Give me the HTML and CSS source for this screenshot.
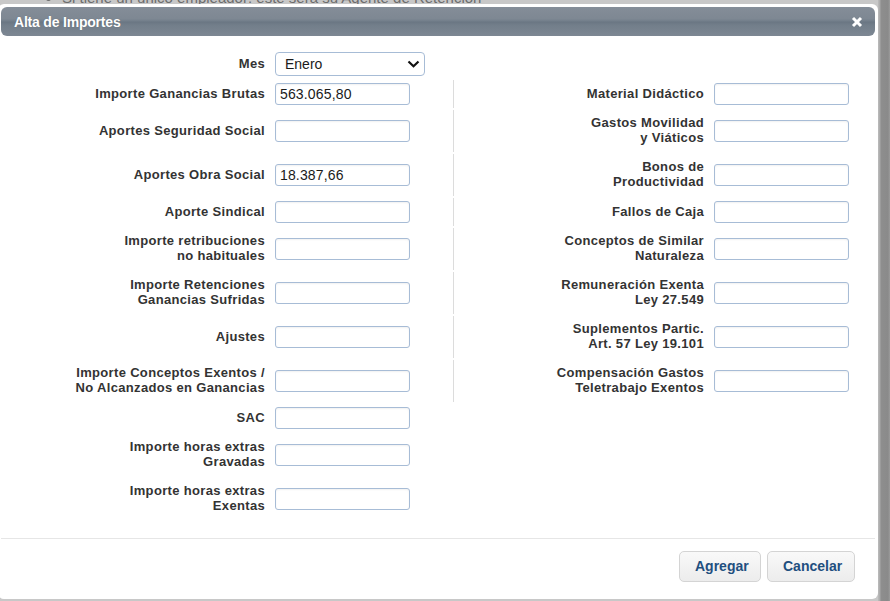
FILE: index.html
```html
<!DOCTYPE html>
<html lang="es">
<head>
<meta charset="utf-8">
<title>Alta de Importes</title>
<link rel="stylesheet" href="styles.css">
</head>
<body>
<div class="page">
  <ul class="bg-list">
    <li>Si tiene un único empleador: este será su Agente de Retención</li>
  </ul>
</div>
<div class="scroll-strip"></div>

<div class="dialog">
  <div class="titlebar">
    <span class="title">Alta de Importes</span>
    <svg class="close" width="12" height="12" viewBox="0 0 12 12"><path d="M2 2 L10 10 M10 2 L2 10" stroke="#fff" stroke-width="3" stroke-linecap="butt"/></svg>
  </div>
  <div class="content">
    <div class="form">
      <div class="lbl">Mes</div>
      <div class="fld sel-cell">
        <div class="select-wrap">
          <select class="select"><option>Enero</option></select>
          <svg class="chev" width="13" height="8" viewBox="0 0 13 8"><path d="M1.5 1.5 L6.5 6.2 L11.5 1.5" fill="none" stroke="#111" stroke-width="2.2"/></svg>
        </div>
      </div>
      <div></div><div></div>

      <div class="lbl">Importe Ganancias Brutas</div>
      <div class="fld"><input class="inp" value="563.065,80"></div>
      <div class="lbl div">Material Didáctico</div>
      <div class="fld"><input class="inp"></div>

      <div class="lbl">Aportes Seguridad Social</div>
      <div class="fld"><input class="inp"></div>
      <div class="lbl div">Gastos Movilidad<br>y Viáticos</div>
      <div class="fld"><input class="inp"></div>

      <div class="lbl">Aportes Obra Social</div>
      <div class="fld"><input class="inp" value="18.387,66"></div>
      <div class="lbl div">Bonos de<br>Productividad</div>
      <div class="fld"><input class="inp"></div>

      <div class="lbl">Aporte Sindical</div>
      <div class="fld"><input class="inp"></div>
      <div class="lbl div">Fallos de Caja</div>
      <div class="fld"><input class="inp"></div>

      <div class="lbl">Importe retribuciones<br>no habituales</div>
      <div class="fld"><input class="inp"></div>
      <div class="lbl div">Conceptos de Similar<br>Naturaleza</div>
      <div class="fld"><input class="inp"></div>

      <div class="lbl">Importe Retenciones<br>Ganancias Sufridas</div>
      <div class="fld"><input class="inp"></div>
      <div class="lbl div">Remuneración Exenta<br>Ley 27.549</div>
      <div class="fld"><input class="inp"></div>

      <div class="lbl">Ajustes</div>
      <div class="fld"><input class="inp"></div>
      <div class="lbl div">Suplementos Partic.<br>Art. 57 Ley 19.101</div>
      <div class="fld"><input class="inp"></div>

      <div class="lbl">Importe Conceptos Exentos /<br>No Alcanzados en Ganancias</div>
      <div class="fld"><input class="inp"></div>
      <div class="lbl div">Compensación Gastos<br>Teletrabajo Exentos</div>
      <div class="fld"><input class="inp"></div>

      <div class="lbl">SAC</div>
      <div class="fld"><input class="inp"></div>
      <div></div><div></div>

      <div class="lbl">Importe horas extras<br>Gravadas</div>
      <div class="fld"><input class="inp"></div>
      <div></div><div></div>

      <div class="lbl">Importe horas extras<br>Exentas</div>
      <div class="fld"><input class="inp"></div>
      <div></div><div></div>
    </div>
  </div>
  <div class="buttonpane">
    <button class="btn">Agregar</button>
    <button class="btn">Cancelar</button>
  </div>
</div>
</body>
</html>
```

FILE: styles.css
```css
html, body {
  margin: 0;
  padding: 0;
}
body {
  width: 890px;
  height: 601px;
  overflow: hidden;
  background: #c8c8c8;
  font-family: "Liberation Sans", Arial, sans-serif;
  position: relative;
}
.page {
  color: #6c6c6c;
  font-size: 15px;
  line-height: 18px;
}
.bg-list {
  margin: -11px 0 0 0;
  padding-left: 62px;
  list-style: disc;
}
.scroll-strip {
  position: absolute;
  left: 878px;
  top: 0;
  width: 12px;
  height: 601px;
  background: linear-gradient(to right, #bdbdbd 0, #a8a8a8 2px, #8e8e8e 3px, #8a8a8a 10px, #9c9c9c 12px);
}
.dialog {
  position: absolute;
  left: -2px;
  top: 4px;
  width: 880px;
  height: 595px;
  box-sizing: border-box;
  padding: 3px;
  background: #fff;
  border-radius: 6px;
  display: flex;
  flex-direction: column;
}
.titlebar {
  height: 29px;
  border-radius: 6px;
  background: linear-gradient(#848d98 0%, #7e8893 40%, #737f8b 48%, #6a7683 52%, #727e8a 62%, #7d8793 100%);
  display: flex;
  align-items: center;
  justify-content: space-between;
  padding: 0 12px 0 13px;
  flex: none;
}
.title {
  color: #fff;
  font-weight: bold;
  font-size: 14px;
  letter-spacing: -0.2px;
  text-shadow: 0 0 1px rgba(0,0,0,0.2);
}
.close {
  display: block;
}
.content {
  padding: 14px 0 18px 9px;
  flex: none;
}
.form {
  display: grid;
  grid-template-columns: 259px 180px 255px 140px;
  gap: 2px;
}
.lbl {
  display: flex;
  align-items: center;
  justify-content: flex-end;
  text-align: right;
  padding: 5px 4px 7px 0;
  font-size: 13px;
  line-height: 15px;
  font-weight: bold;
  letter-spacing: 0.33px;
  color: #333;
}
.lbl.div {
  border-left: 1px solid #dcdcdc;
}
.fld {
  display: flex;
  align-items: center;
  padding: 3px 0 3px 4px;
}
.fld.sel-cell {
  padding: 2px 0 2px 4px;
}
.inp {
  width: 135px;
  height: 22px;
  box-sizing: border-box;
  border: 1px solid #a7bcd6;
  border-radius: 3px;
  padding: 0 4px;
  margin: 0;
  font-family: "Liberation Sans", Arial, sans-serif;
  font-size: 14px;
  letter-spacing: 0.15px;
  color: #1a1a1a;
  background: #fff;
  box-shadow: inset 0 1px 2px rgba(0,0,0,0.06);
  outline: none;
}
.select-wrap {
  position: relative;
  width: 150px;
  height: 24px;
}
.select {
  appearance: none;
  -webkit-appearance: none;
  width: 150px;
  height: 24px;
  box-sizing: border-box;
  border: 1px solid #a7bcd6;
  border-radius: 4px;
  padding: 0 0 0 9px;
  margin: 0;
  font-family: "Liberation Sans", Arial, sans-serif;
  font-size: 14px;
  color: #1a1a1a;
  background: #fff;
  outline: none;
}
.chev {
  position: absolute;
  right: 5px;
  top: 8px;
  pointer-events: none;
}
.buttonpane {
  border-top: 1px solid #e6e6e6;
  padding: 12px 20px 0 0;
  display: flex;
  justify-content: flex-end;
  gap: 6px;
}
.btn {
  height: 31px;
  box-sizing: border-box;
  padding: 0 15px 1px;
  border: 1px solid #d4d4d4;
  border-radius: 5px;
  background: linear-gradient(#f9f9f9, #ececec);
  font-family: "Liberation Sans", Arial, sans-serif;
  font-weight: bold;
  font-size: 14px;
  color: #1f4f7f;
}
.btn:first-child {
  width: 82px;
}
.btn:last-child {
  width: 88px;
}
```
